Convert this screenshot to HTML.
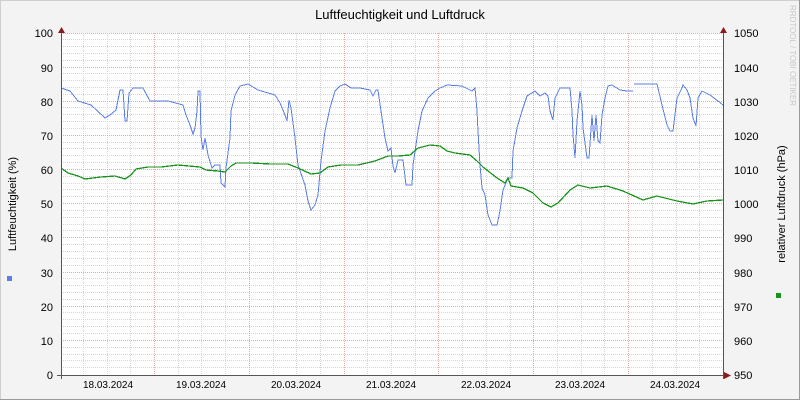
<!DOCTYPE html>
<html><head><meta charset="utf-8"><style>
html,body{margin:0;padding:0;}
body{width:800px;height:400px;overflow:hidden;background:#f3f3f3;}
svg{display:block;}
text{font-family:"Liberation Sans",sans-serif;}
</style></head><body>
<svg width="800" height="400" xmlns="http://www.w3.org/2000/svg">
<rect x="0" y="0" width="800" height="400" fill="#f3f3f3"/>
<path d="M0.5 400V0.5H799.5" stroke="#cfcfcf" fill="none"/>
<path d="M799.5 0V399.5H0" stroke="#9a9a9a" fill="none"/>
<rect x="61" y="33" width="662" height="342" fill="#fff"/>
<g id="grid" stroke-dasharray="1,1" fill="none">
<g stroke="#d6d6d6">
<path d="M61 367.5H723M61 360.5H723M61 354.5H723M61 347.5H723M61 333.5H723M61 326.5H723M61 319.5H723M61 312.5H723M61 299.5H723M61 292.5H723M61 285.5H723M61 278.5H723M61 265.5H723M61 258.5H723M61 251.5H723M61 244.5H723M61 230.5H723M61 224.5H723M61 217.5H723M61 210.5H723M61 196.5H723M61 189.5H723M61 183.5H723M61 176.5H723M61 162.5H723M61 155.5H723M61 148.5H723M61 142.5H723M61 128.5H723M61 121.5H723M61 114.5H723M61 107.5H723M61 94.5H723M61 87.5H723M61 80.5H723M61 73.5H723M61 60.5H723M61 53.5H723M61 46.5H723M61 39.5H723"/>
<path d="M83.5 33V375M107.5 33V375M130.5 33V375M178.5 33V375M201.5 33V375M225.5 33V375M273.5 33V375M296.5 33V375M320.5 33V375M367.5 33V375M391.5 33V375M415.5 33V375M462.5 33V375M486.5 33V375M510.5 33V375M557.5 33V375M581.5 33V375M604.5 33V375M652.5 33V375M676.5 33V375M699.5 33V375"/>
</g>
<g stroke="#e4aaaa">
<path d="M61 340.5H723M61 306.5H723M61 272.5H723M61 237.5H723M61 203.5H723M61 169.5H723M61 135.5H723M61 101.5H723M61 67.5H723M61 33.5H723"/>
<path d="M154.5 33V375M249.5 33V375M344.5 33V375M438.5 33V375M533.5 33V375M628.5 33V375"/>
</g>
</g>
<polyline fill="none" stroke="#5b7fe6" stroke-width="1" shape-rendering="crispEdges" points="61,88 70,91 78,101 91,105 105,118 110,115 116,110 120,90 123,90 125,121 127,121 129,93 133,88 143,88 150,101 168,101 183,105 186,115 190,125 193,134 195,128 197,111 198,91 200,91 201,136 203,150 205,138 208,155 212,168 215,165 220,165 221,183 225,187 226,168 230,138 231,111 235,95 240,86 248,84 258,90 275,95 280,103 285,115 287,121 289,100 291,108 295,138 298,165 305,185 308,201 311,210 315,205 318,195 321,161 325,131 330,108 335,91 340,86 345,84 351,88 360,88 370,90 373,96 376,90 378,90 381,111 385,138 388,151 391,148 393,166 395,173 398,160 403,160 406,185 412,185 413,165 418,131 422,111 428,98 435,91 440,88 447,85 462,86 472,91 475,88 477,111 478,131 480,165 482,188 485,195 488,215 492,225 497,225 500,211 503,190 508,178 512,178 513,151 517,128 522,111 527,96 535,91 540,96 545,93 548,96 550,111 553,120 555,98 560,88 570,88 572,111 573,135 575,158 577,121 580,91 582,105 583,128 587,158 589,158 592,115 594,141 596,115 598,141 600,143 602,115 605,98 608,86 612,85 620,90 627,91 633,91"/>
<polyline fill="none" stroke="#5b7fe6" stroke-width="1" shape-rendering="crispEdges" points="634,84 657,84 662,105 667,125 670,131 673,131 677,98 682,88 683,85 687,90 690,98 693,118 696,126 698,98 702,91 710,95 718,101 723,105"/>
<polyline fill="none" stroke="#17941a" stroke-width="1.3" shape-rendering="crispEdges" points="61,168 68,173 78,176 85,179 101,177 115,176 125,179 131,175 136,169 148,167 161,167 178,165 200,167 206,170 218,171 225,172 231,166 236,163 251,163 271,164 288,164 298,168 311,174 320,173 328,167 341,165 358,165 375,161 388,156 398,156 410,155 418,148 430,145 440,146 447,151 455,153 470,155 477,161 483,167 497,178 505,183 508,178 511,186 523,188 533,193 543,203 551,207 558,203 570,190 578,185 590,188 607,186 623,191 643,200 657,196 677,201 693,204 707,201 723,200"/>
<g stroke="#555" fill="none">
<path d="M61.5 30V379M57 375.5H727M723.5 30V379"/>
</g>
<g fill="#8b1a1a">
<path d="M58 33L61.5 27L65 33Z"/><path d="M720 33L723.5 27L727 33Z"/><path d="M724 372L731 375.5L724 379Z"/>
</g>
<g font-size="11" fill="#000" text-anchor="end">
<text x="53" y="37">100</text><text x="53" y="72">90</text><text x="53" y="106">80</text><text x="53" y="140">70</text><text x="53" y="174">60</text><text x="53" y="208">50</text><text x="53" y="242">40</text><text x="53" y="277">30</text><text x="53" y="311">20</text><text x="53" y="345">10</text><text x="53" y="379">0</text>
</g>
<g font-size="11" fill="#000" text-anchor="start">
<text x="734" y="37">1050</text><text x="734" y="72">1040</text><text x="734" y="106">1030</text><text x="734" y="140">1020</text><text x="734" y="174">1010</text><text x="734" y="208">1000</text><text x="734" y="242">990</text><text x="734" y="277">980</text><text x="734" y="311">970</text><text x="734" y="345">960</text><text x="734" y="379">950</text>
</g>
<g font-size="10" fill="#000" text-anchor="middle">
<text x="108" y="388">18.03.2024</text><text x="201" y="388">19.03.2024</text><text x="296" y="388">20.03.2024</text><text x="391" y="388">21.03.2024</text><text x="486" y="388">22.03.2024</text><text x="580" y="388">23.03.2024</text><text x="675" y="388">24.03.2024</text>
</g>
<text x="400" y="19" font-size="13" text-anchor="middle" fill="#000">Luftfeuchtigkeit und Luftdruck</text>
<text transform="translate(16,204) rotate(-90)" font-size="11" text-anchor="middle" fill="#000">Luftfeuchtigkeit (%)</text>
<text transform="translate(785,204) rotate(-90)" font-size="11" text-anchor="middle" fill="#000">relativer Luftdruck (hPa)</text>
<text transform="translate(790,5) rotate(90)" font-size="8" fill="#c8c8c8">RRDTOOL / TOBI OETIKER</text>
<rect x="7" y="276" width="5" height="5" fill="#5b7fe6"/>
<rect x="776" y="293" width="5" height="5" fill="#17941a"/>
</svg>
</body></html>
